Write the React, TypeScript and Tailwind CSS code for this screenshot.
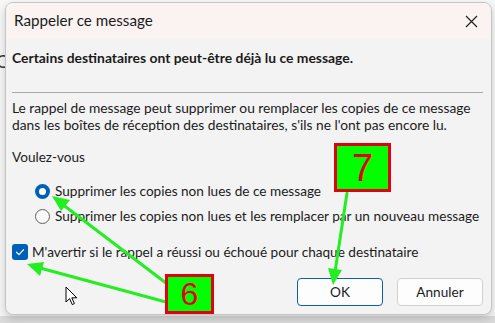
import React from 'react';

const font = "font-['Lato','Liberation_Sans',sans-serif]";

function Radio({ checked }: { checked?: boolean }) {
  if (checked) {
    return (
      <span className="flex h-[15px] w-[15px] shrink-0 items-center justify-center rounded-full bg-[#005fb8]">
        <span className="h-[7px] w-[7px] rounded-full bg-white" />
      </span>
    );
  }
  return <span className="h-[15px] w-[15px] shrink-0 rounded-full border border-[#5f5f5f] bg-[#f9f9f9]" />;
}

function Checkbox() {
  return (
    <span className="flex h-[16px] w-[16px] shrink-0 items-center justify-center rounded-[3px] bg-[#005fb8]">
      <svg width="10" height="10" viewBox="0 0 10 10" fill="none">
        <path d="M1.5 5.2 L4 7.6 L8.6 2.6" stroke="white" strokeWidth="1.2" strokeLinecap="round" strokeLinejoin="round" />
      </svg>
    </span>
  );
}

function Tag({ n, className }: { n: string; className: string }) {
  return (
    <div
      className={`absolute flex items-center justify-center border-[3px] border-[#e3000f] bg-[#00ff00] text-[#e3000f] font-['Liberation_Sans',sans-serif] leading-none ${className}`}
    >
      {n}
    </div>
  );
}

export default function App() {
  return (
    <div className={`relative h-[323px] w-[495px] overflow-hidden bg-[#dcdcdc] ${font}`}>
      {/* window behind the dialog */}
      <div className="absolute left-0 top-0 h-[316px] w-[495px] bg-[#f7f7f7]" />
      <div className="absolute left-[-4px] top-[52px] text-[18px] leading-none text-[#333]">C</div>

      <div className="relative pl-[5px] pt-[2px]">
        <div className="flex h-[313px] w-[487px] flex-col overflow-hidden rounded-[8px] border border-[#c4c4c4] bg-[#f3f3f3] shadow-[0_4px_10px_rgba(0,0,0,0.18)]">
          <div className="flex h-[36px] shrink-0 items-center justify-between bg-[#faf3f2] pl-[8px] pr-[13px]">
            <span className="text-[15.2px] leading-none text-[#1b1b1b]">Rappeler ce message</span>
            <svg width="13" height="13" viewBox="0 0 13 13">
              <path d="M1 1 L12 12 M12 1 L1 12" stroke="#1b1b1b" strokeWidth="1.1" />
            </svg>
          </div>

          <div className="flex flex-1 flex-col whitespace-nowrap px-[6px] text-[13.6px] leading-[17px] text-[#1b1b1b]">
            <p className="mt-[10px] text-[13.9px] font-bold">Certains destinataires ont peut-être déjà lu ce message.</p>
            <div className="mt-[26px] h-px w-[471px] bg-[#a9a9a9]" />
            <p className="mt-[6px] text-[13.75px]">
              Le rappel de message peut supprimer ou remplacer les copies de ce message
              <br />
              dans les boîtes de réception des destinataires, s'ils ne l'ont pas encore lu.
            </p>
            <p className="mt-[16px]">Voulez-vous</p>

            <div className="ml-[23px] mt-[14px] flex h-[22px] items-center gap-[5px]">
              <Radio checked />
              <span>Supprimer les copies non lues de ce message</span>
            </div>
            <div className="ml-[23px] mt-[3px] flex h-[22px] items-center gap-[5px]">
              <Radio />
              <span>Supprimer les copies non lues et les remplacer par un nouveau message</span>
            </div>

            <div className="mt-[14px] flex h-[22px] items-center gap-[4px]">
              <Checkbox />
              <span>M'avertir si le rappel a réussi ou échoué pour chaque destinataire</span>
            </div>

            <div className="mt-[15px] flex justify-end gap-[14px] pr-[2px]">
              <button className="h-[28px] w-[86px] rounded-[4px] border border-[#0f5ea8] bg-[#fdfdfd] text-[13.6px] text-[#1b1b1b]">
                OK
              </button>
              <button className="h-[28px] w-[86px] rounded-[4px] border border-[#d0d0d0] bg-[#fdfdfd] text-[13.6px] text-[#1b1b1b]">
                Annuler
              </button>
            </div>
          </div>
        </div>
      </div>

      {/* annotations */}
      <svg className="absolute left-0 top-0" width="495" height="323" viewBox="0 0 495 323">
        <g stroke="#22ee22" strokeWidth="3" strokeLinecap="round">
          <line x1="166" y1="283" x2="62" y2="204" />
          <line x1="166" y1="302" x2="40" y2="268" />
          <line x1="347" y1="193" x2="335" y2="272" />
        </g>
        <g fill="#22ee22">
          <polygon points="52,196 70,200 61,211" />
          <polygon points="27,264 44,262 40,276" />
          <polygon points="333,285 328,268 342,270" />
        </g>
      </svg>

      <Tag n="7" className="left-[334px] top-[143px] h-[49px] w-[57px] text-[38px]" />
      <Tag n="6" className="left-[165px] top-[274px] h-[40px] w-[49px] text-[32px]" />

      <svg className="absolute left-[65px] top-[286px]" width="14" height="20" viewBox="0 0 14 20">
        <path d="M1 1 L1 16 L4.6 12.6 L7.3 18.6 L9.4 17.6 L6.8 11.8 L11.8 11.8 Z" fill="white" stroke="black" strokeWidth="1" strokeLinejoin="round" />
      </svg>
    </div>
  );
}
